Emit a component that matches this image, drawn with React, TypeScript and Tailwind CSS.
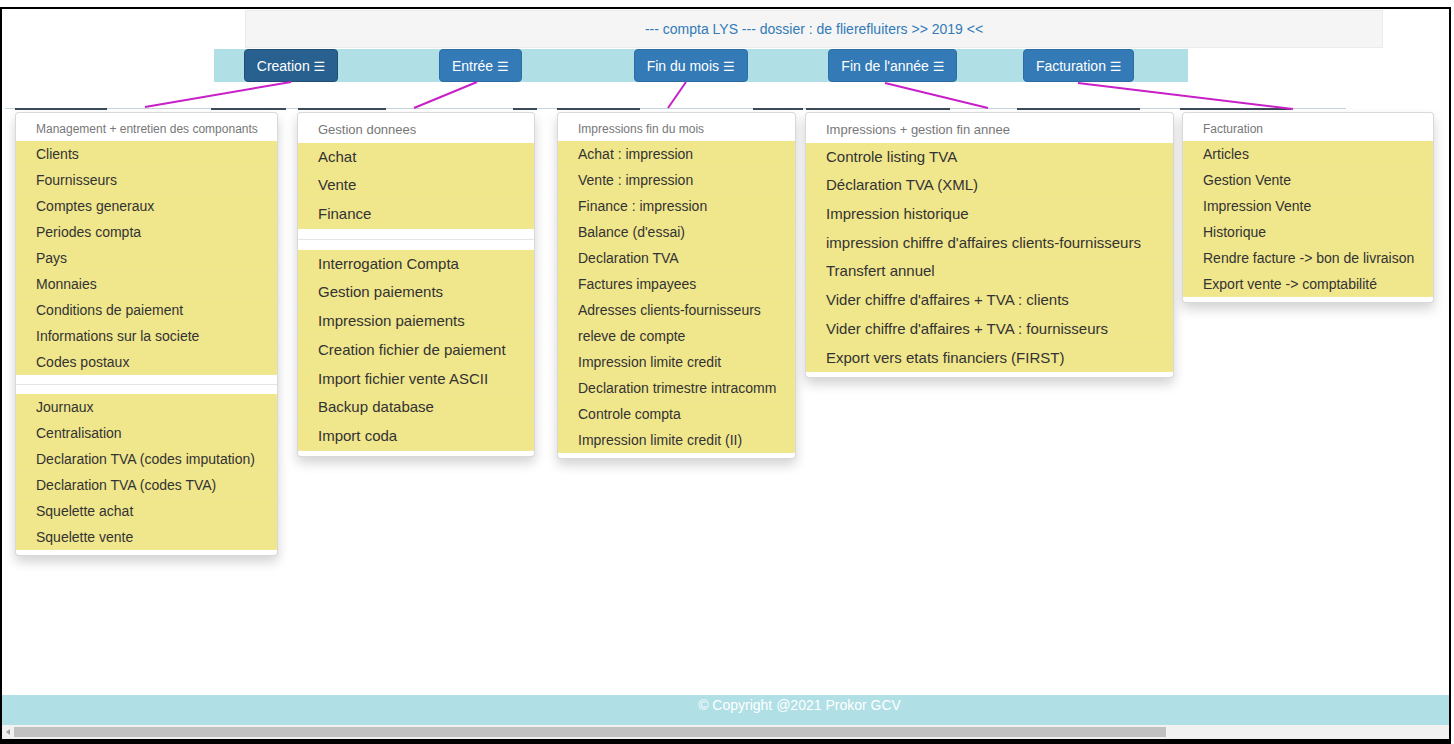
type Menu = {
  box: string;
  big: boolean;
  header: string;
  groups: string[][];
};

const menus: Menu[] = [
  {
    box: "ml-[13px] w-[263px]",
    big: false,
    header: "Management + entretien des componants",
    groups: [
      [
        "Clients",
        "Fournisseurs",
        "Comptes generaux",
        "Periodes compta",
        "Pays",
        "Monnaies",
        "Conditions de paiement",
        "Informations sur la societe",
        "Codes postaux",
      ],
      [
        "Journaux",
        "Centralisation",
        "Declaration TVA (codes imputation)",
        "Declaration TVA (codes TVA)",
        "Squelette achat",
        "Squelette vente",
      ],
    ],
  },
  {
    box: "ml-[19px] w-[238px]",
    big: true,
    header: "Gestion donnees",
    groups: [
      ["Achat", "Vente", "Finance"],
      [
        "Interrogation Compta",
        "Gestion paiements",
        "Impression paiements",
        "Creation fichier de paiement",
        "Import fichier vente ASCII",
        "Backup database",
        "Import coda",
      ],
    ],
  },
  {
    box: "ml-[22px] w-[239px]",
    big: false,
    header: "Impressions fin du mois",
    groups: [
      [
        "Achat : impression",
        "Vente : impression",
        "Finance : impression",
        "Balance (d'essai)",
        "Declaration TVA",
        "Factures impayees",
        "Adresses clients-fournisseurs",
        "releve de compte",
        "Impression limite credit",
        "Declaration trimestre intracomm",
        "Controle compta",
        "Impression limite credit (II)",
      ],
    ],
  },
  {
    box: "ml-[9px] w-[369px]",
    big: true,
    header: "Impressions + gestion fin annee",
    groups: [
      [
        "Controle listing TVA",
        "Déclaration TVA (XML)",
        "Impression historique",
        "impression chiffre d'affaires clients-fournisseurs",
        "Transfert annuel",
        "Vider chiffre d'affaires + TVA : clients",
        "Vider chiffre d'affaires + TVA : fournisseurs",
        "Export vers etats financiers (FIRST)",
      ],
    ],
  },
  {
    box: "ml-[8px] w-[252px]",
    big: false,
    header: "Facturation",
    groups: [
      [
        "Articles",
        "Gestion Vente",
        "Impression Vente",
        "Historique",
        "Rendre facture -> bon de livraison",
        "Export vente -> comptabilité",
      ],
    ],
  },
];

const buttons = [
  { label: "Creation", w: "w-[94px]", active: true },
  { label: "Entrée", w: "w-[83px]", active: false },
  { label: "Fin du mois", w: "w-[114px]", active: false },
  { label: "Fin de l'année", w: "w-[129px]", active: false },
  { label: "Facturation", w: "w-[111px]", active: false },
];

// strip of hidden element edges at y=108
const strip: [number, boolean][] = [
  [10, false], [92, true], [104, false], [75, true], [12, false], [88, true],
  [127, false], [24, true], [20, false], [83, true], [113, false], [50, true],
  [3, false], [144, true], [67, false], [123, true], [40, false], [111, true],
  [55, false],
];

const links = [
  [291, 82, 145, 107],
  [477, 82, 414, 108],
  [686, 82, 668, 108],
  [885, 83, 988, 108],
  [1078, 83, 1293, 109],
];

function Dropdown({ menu }: { menu: Menu }) {
  const item = menu.big
    ? "text-[15px] leading-[22.7px]"
    : "text-[14px] leading-[20px]";
  const head = menu.big
    ? "text-[13px] leading-[18.6px]"
    : "text-[12px] leading-[17px]";
  const divider = menu.big ? "my-[10px]" : "my-[9px]";
  return (
    <ul
      className={`${menu.box} shrink-0 bg-white border border-black/15 rounded-[4px] py-[5px] shadow-[0_6px_12px_rgba(0,0,0,0.175)]`}
    >
      <li className={`${head} px-5 py-[3px] text-[#777] whitespace-nowrap`}>
        {menu.header}
      </li>
      {menu.groups.map((g, gi) => (
        <div key={gi}>
          {gi > 0 && <li className={`h-px ${divider} bg-[#e5e5e5]`} />}
          {g.map((t) => (
            <li
              key={t}
              className={`${item} px-5 py-[3px] bg-[#f0e68c] text-[#333] whitespace-nowrap shadow-[inset_0_-1px_0_rgba(255,255,255,0.08)]`}
            >
              {t}
            </li>
          ))}
        </div>
      ))}
    </ul>
  );
}

export default function App() {
  return (
    <div className="relative w-[1454px] h-[744px] bg-white overflow-hidden font-['Liberation_Sans',Arial,sans-serif]">
      <div className="mt-[7px] w-[1451px] h-[737px] border-2 border-b-[5px] border-black flex flex-col">
        <div className="ml-[243px] mt-px w-[1138px] h-[38px] bg-[#f5f5f5] border border-[#ebebeb] flex items-center justify-center text-[14px] text-[#337ab7]">
          --- compta LYS --- dossier : de flierefluiters &gt;&gt; 2019 &lt;&lt;
        </div>

        <nav className="ml-[212px] mt-px w-[974px] h-[33px] bg-[#b0e0e6] grid grid-cols-5">
          {buttons.map((b) => (
            <div key={b.label} className="pl-[30px]">
              <button
                className={`${b.w} h-[33px] pt-px rounded-[4px] border text-[14px] text-white whitespace-nowrap ${
                  b.active
                    ? "bg-[#286090] border-[#204d74]"
                    : "bg-[#337ab7] border-[#2e6da4]"
                }`}
              >
                {b.label} <span className="font-['DejaVu_Sans',sans-serif] text-[13px]">☰</span>
              </button>
            </div>
          ))}
        </nav>

        <div className="ml-[3px] mt-[26px] flex h-[2px]">
          {strip.map(([w, dark], i) => (
            <div
              key={i}
              style={{ width: w }}
              className={dark ? "h-[2px] bg-[#3b4b5a]" : "h-px bg-[#c9d4da]"}
            />
          ))}
        </div>

        <div className="mt-[2px] flex items-start">
          {menus.map((m) => (
            <Dropdown key={m.header} menu={m} />
          ))}
        </div>

        <div className="flex-1" />

        <footer className="h-[30px] bg-[#b0e0e6] flex justify-center pl-[148px] pt-px">
          <span className="text-[14px] leading-[18px] text-white">
            © Copyright @2021 Prokor GCV
          </span>
        </footer>
        <div className="h-[14px] bg-[#f1f1f1] flex items-center">
          <div className="w-[12px] flex justify-center">
            <div className="w-0 h-0 border-y-[3px] border-y-transparent border-r-[4px] border-r-[#a3a3a3]" />
          </div>
          <div className="w-[1152px] h-[10px] bg-[#c1c1c1]" />
        </div>
      </div>

      <svg
        className="absolute inset-0 pointer-events-none"
        width="1454"
        height="744"
        viewBox="0 0 1454 744"
      >
        {links.map(([x1, y1, x2, y2], i) => (
          <line
            key={i}
            x1={x1}
            y1={y1}
            x2={x2}
            y2={y2}
            stroke="#c81fc8"
            strokeWidth="2"
          />
        ))}
      </svg>
    </div>
  );
}
